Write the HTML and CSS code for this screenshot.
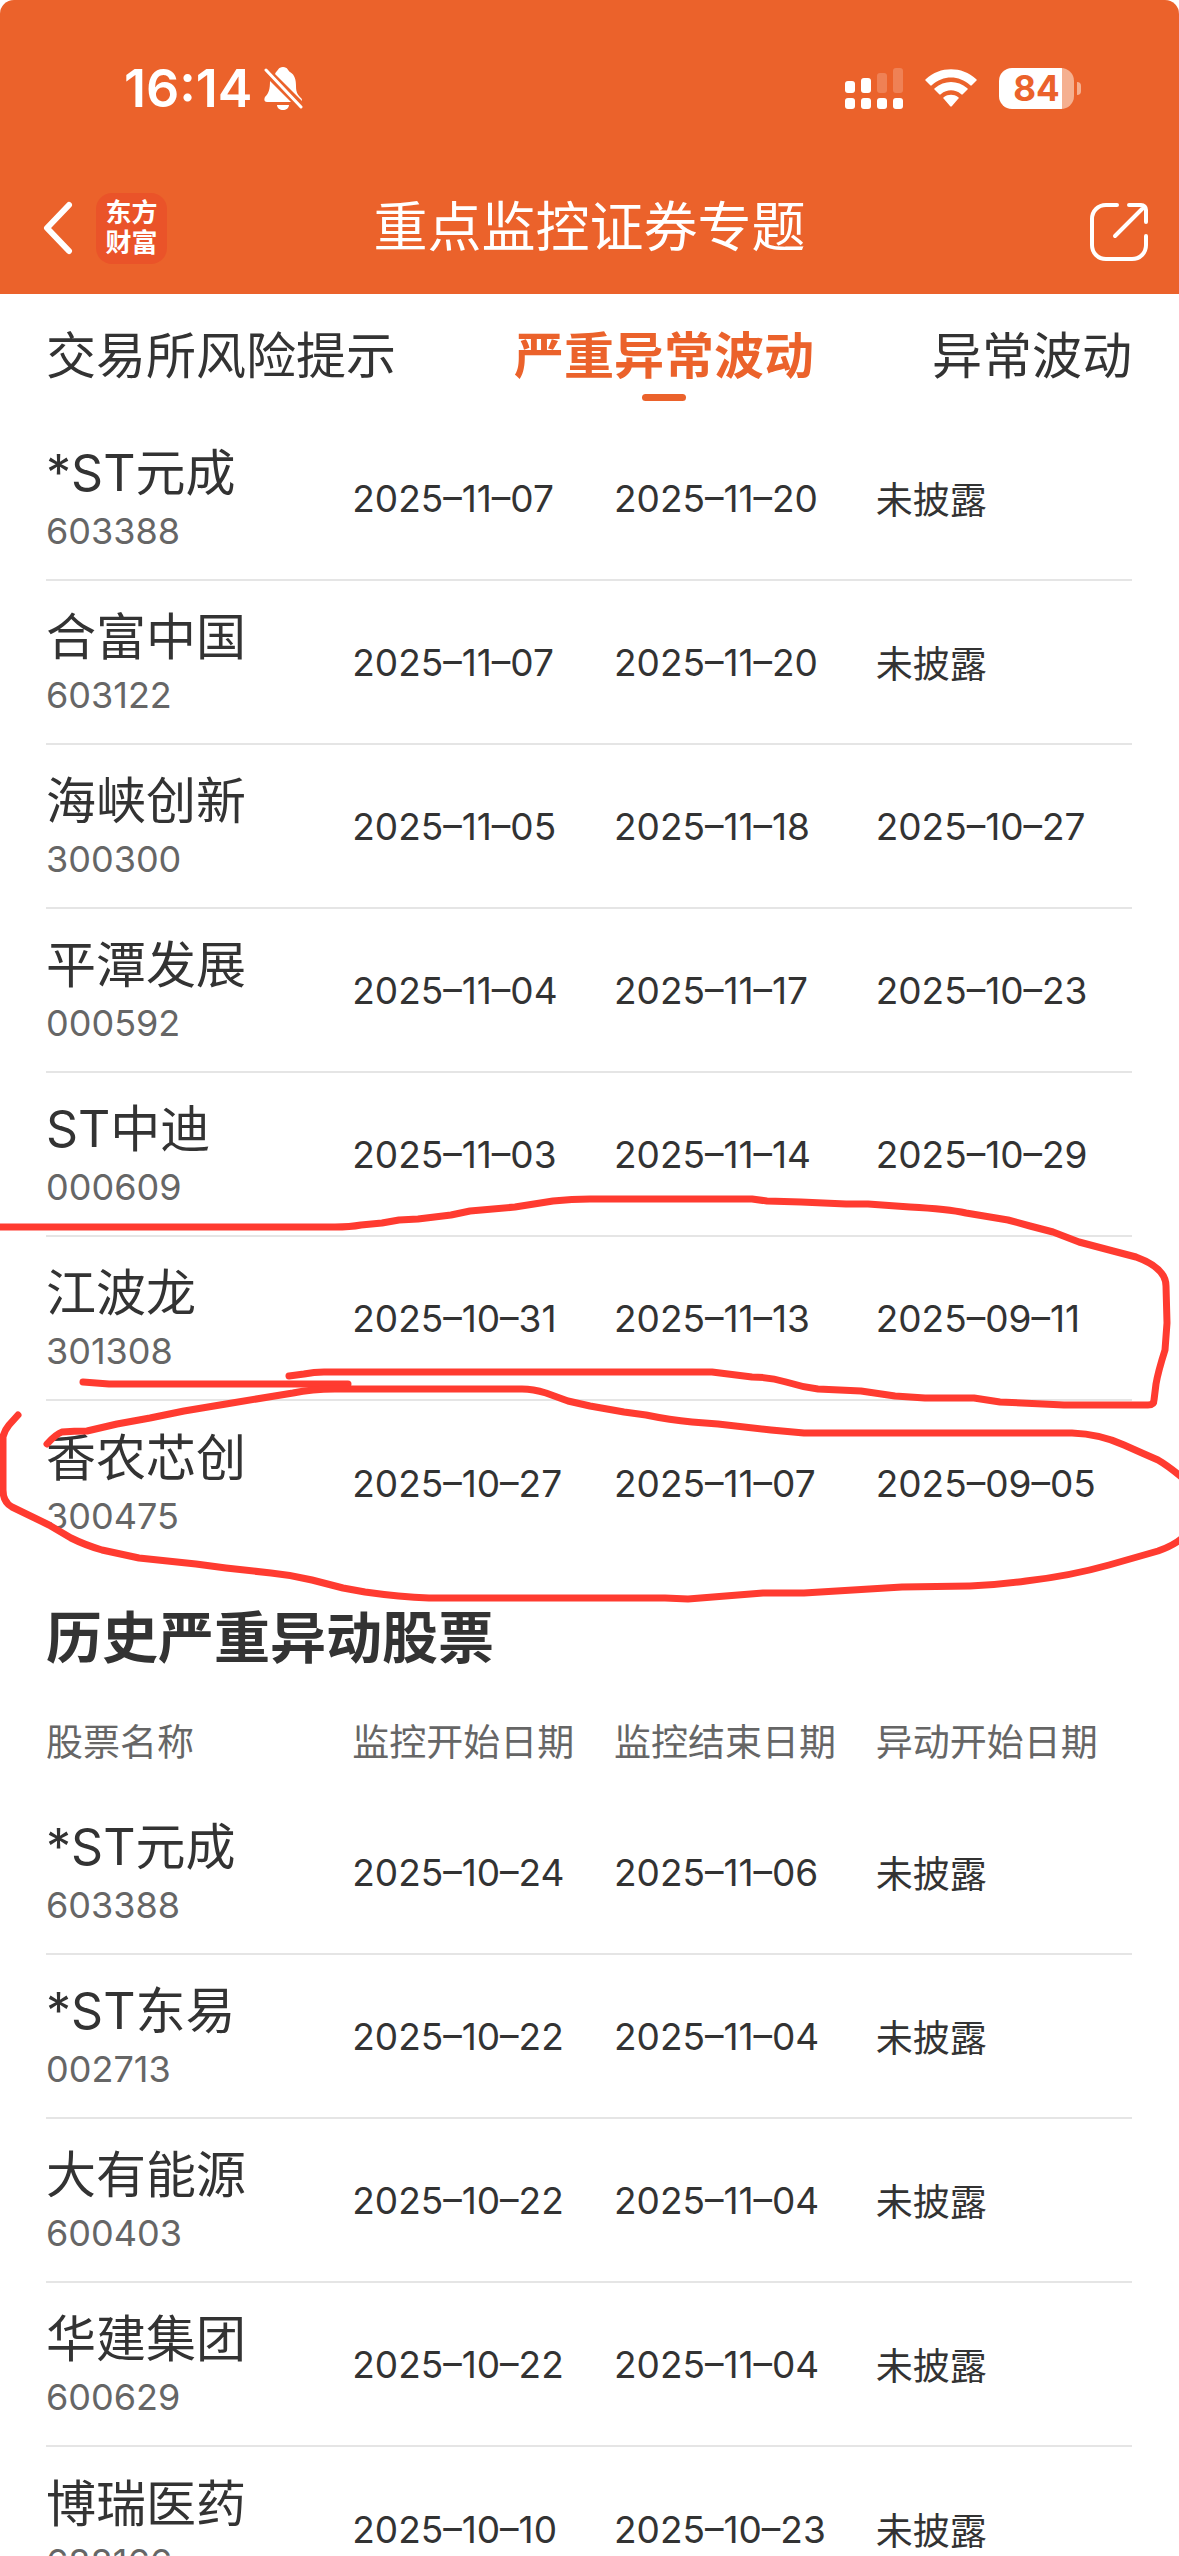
FILE: index.html
```html
<!DOCTYPE html>
<html lang="zh-CN">
<head>
    <meta charset="UTF-8">
    <meta name="viewport" content="width=device-width, initial-scale=1.0">
    <title>重点监控证券专题</title>
    <link rel="stylesheet" href="styles.css">
</head>
<body>
    <header class="header">
        <div class="status-bar">
            <div class="status-left">
                <span class="time">16:14</span>
                <svg class="bell" viewBox="0 0 39 43" width="39" height="43">
                    <path fill="#fff" d="M12 5C14 4 14 0 19 0s5 4 7 5c5 3 6 8 6 14 0 7 2 9 5 12 1 1 1 2 1 3L11 7zM6 14l21 21H3c-3 0-3-3-2-5 4-4 5-8 5-16zM13 38h12c0 3-3 5-6 5s-6-2-6-5z"/>
                    <path stroke="#fff" stroke-width="3" stroke-linecap="round" d="M2 3l35 37"/>
                </svg>
            </div>
            <div class="status-right">
                <svg viewBox="0 0 58 41" width="58" height="41" fill="#fff">
                    <rect x="0" y="13" width="10" height="12" rx="3"/>
                    <rect x="16" y="10" width="10" height="15" rx="3"/>
                    <rect x="32" y="5" width="10" height="20" rx="3" opacity=".2"/>
                    <rect x="48" y="0" width="10" height="25" rx="3" opacity=".2"/>
                    <rect x="0" y="30" width="10" height="11" rx="3"/>
                    <rect x="16" y="30" width="10" height="11" rx="3"/>
                    <rect x="32" y="30" width="10" height="11" rx="3"/>
                    <rect x="48" y="30" width="10" height="11" rx="3"/>
                </svg>
                <svg viewBox="0 0 52 38" width="52" height="38" fill="#fff">
                    <path d="M1 10C15-3 37-3 51 10c1 1 1 1 0 2l-4 4c-1 1-1 1-2 0C34 6 18 6 7 16c-1 1-1 1-2 0l-4-4c-1-1-1-1 0-2z"/>
                    <path d="M10 19c9-8 23-8 32 0 1 1 1 1 0 2l-4 4c-1 1-1 1-2 0-6-5-14-5-20 0-1 1-1 1-2 0l-4-4c-1-1-1-1 0-2z"/>
                    <path d="M19 28c4-3 10-3 14 0 1 1 1 1 0 2l-6 7c-1 1-1 1-2 0l-6-7c-1-1-1-1 0-2z"/>
                </svg>
                <div class="battery">
                    <span class="battery-level">84</span>
                </div>
            </div>
        </div>
        <div class="nav-bar">
            <div class="nav-left">
                <button class="icon-button" aria-label="返回">
                    <svg viewBox="0 0 30 54" width="30" height="54" fill="none" stroke="#fff" stroke-width="6" stroke-linecap="round" stroke-linejoin="round">
                        <path d="M26 4L4 27l22 23"/>
                    </svg>
                </button>
                <a class="logo" href="#">东方<br>财富</a>
            </div>
            <h1 class="nav-title">重点监控证券专题</h1>
            <button class="icon-button" aria-label="分享">
                <svg viewBox="0 -8 60 68" width="60" height="68" fill="none" stroke="#fff" stroke-width="4" stroke-linecap="round" stroke-linejoin="round">
                    <path d="M28 3H17C9 3 3 9 3 17v26c0 8 6 14 14 14h26c8 0 14-6 14-14V34"/>
                    <path d="M40 3h12c3 0 5 2 5 5v12M54 6L26 34"/>
                </svg>
            </button>
        </div>
    </header>

    <nav class="tabs">
        <a class="tab" href="#">交易所风险提示</a>
        <a class="tab active" href="#">严重异常波动</a>
        <a class="tab" href="#">异常波动</a>
    </nav>

    <main>
        <section class="current">
            <table class="stocks">
                <tbody>
                    <tr>
                        <td><div class="name">*ST元成</div><div class="code">603388</div></td>
                        <td>2025–11–07</td>
                        <td>2025–11–20</td>
                        <td>未披露</td>
                    </tr>
                    <tr>
                        <td><div class="name">合富中国</div><div class="code">603122</div></td>
                        <td>2025–11–07</td>
                        <td>2025–11–20</td>
                        <td>未披露</td>
                    </tr>
                    <tr>
                        <td><div class="name">海峡创新</div><div class="code">300300</div></td>
                        <td>2025–11–05</td>
                        <td>2025–11–18</td>
                        <td>2025–10–27</td>
                    </tr>
                    <tr>
                        <td><div class="name">平潭发展</div><div class="code">000592</div></td>
                        <td>2025–11–04</td>
                        <td>2025–11–17</td>
                        <td>2025–10–23</td>
                    </tr>
                    <tr>
                        <td><div class="name">ST中迪</div><div class="code">000609</div></td>
                        <td>2025–11–03</td>
                        <td>2025–11–14</td>
                        <td>2025–10–29</td>
                    </tr>
                    <tr>
                        <td><div class="name">江波龙</div><div class="code">301308</div></td>
                        <td>2025–10–31</td>
                        <td>2025–11–13</td>
                        <td>2025–09–11</td>
                    </tr>
                    <tr>
                        <td><div class="name">香农芯创</div><div class="code">300475</div></td>
                        <td>2025–10–27</td>
                        <td>2025–11–07</td>
                        <td>2025–09–05</td>
                    </tr>
                </tbody>
            </table>
            <!-- hand-drawn marks around the last two rows -->
            <svg class="marks" viewBox="0 1180 1179 440" preserveAspectRatio="none">
                <path d="M-4 1227H335Q350 1227 361 1225L382 1223 399 1220 418 1219 451 1215 470 1211 515 1207 553 1201Q572 1199 590 1199H752L767 1201 801 1202 846 1204H868L910 1207Q948 1209 966 1213L1008 1220 1030 1226 1053 1232 1079 1242 1113 1251 1136 1257Q1166 1268 1166 1286L1167 1323 1165 1350Q1158 1372 1156 1384L1154 1400Q1154 1405 1148 1405H1064L1000 1402 974 1398H925L895 1396 861 1391 818 1389Q802 1387 786 1382T752 1377L712 1372H324Q314 1372 304 1374L289 1376"/>
                <path d="M83 1382L109 1384H348"/>
                <path d="M47 1444Q56 1434 62 1432 74 1431 87 1431L117 1424 150 1418 184 1411 226 1404 293 1393Q312 1389 335 1389H522Q533 1389 546 1393L568 1401 590 1406 624 1412 646 1415Q670 1420 692 1422L718 1424 771 1430 804 1433H1072Q1100 1434 1124 1445L1142 1453 1158 1460Q1170 1467 1186 1481V1534Q1178 1544 1158 1551L1109 1565Q1070 1576 1026 1581 998 1585 970 1586L902 1587 804 1593H763L688 1599 665 1598H429Q400 1597 365 1592L343 1588 312 1580Q292 1575 271 1573L226 1568 196 1564 139 1558 102 1550Q85 1545 71 1538L49 1525 12 1507Q3 1502 3 1490V1437Q4 1431 9 1425L18 1415"/>
            </svg>
        </section>

        <section class="history">
            <h2>历史严重异动股票</h2>
            <table class="stocks">
                <thead>
                    <tr>
                        <th scope="col">股票名称</th>
                        <th scope="col">监控开始日期</th>
                        <th scope="col">监控结束日期</th>
                        <th scope="col">异动开始日期</th>
                    </tr>
                </thead>
                <tbody>
                    <tr>
                        <td><div class="name">*ST元成</div><div class="code">603388</div></td>
                        <td>2025–10–24</td>
                        <td>2025–11–06</td>
                        <td>未披露</td>
                    </tr>
                    <tr>
                        <td><div class="name">*ST东易</div><div class="code">002713</div></td>
                        <td>2025–10–22</td>
                        <td>2025–11–04</td>
                        <td>未披露</td>
                    </tr>
                    <tr>
                        <td><div class="name">大有能源</div><div class="code">600403</div></td>
                        <td>2025–10–22</td>
                        <td>2025–11–04</td>
                        <td>未披露</td>
                    </tr>
                    <tr>
                        <td><div class="name">华建集团</div><div class="code">600629</div></td>
                        <td>2025–10–22</td>
                        <td>2025–11–04</td>
                        <td>未披露</td>
                    </tr>
                    <tr>
                        <td><div class="name">博瑞医药</div><div class="code">688166</div></td>
                        <td>2025–10–10</td>
                        <td>2025–10–23</td>
                        <td>未披露</td>
                    </tr>
                </tbody>
            </table>
        </section>
    </main>
</body>
</html>
```

FILE: styles.css
```css
* {
    box-sizing: border-box;
}
body {
    margin: 0;
    height: 100vh;
    overflow: hidden;
    background-color: #fff;
    color: #333;
    font-family: Inter, "Noto Sans CJK SC", sans-serif;
    font-size: 37px;
}
a {
    color: inherit;
    text-decoration: none;
}
h1, h2 {
    margin: 0;
}
svg {
    display: block;
}
.header {
    background-color: #eb622b;
    color: #fff;
    border-radius: 14px 14px 0 0;
    padding-bottom: 16px;
}
.status-bar {
    display: flex;
    justify-content: space-between;
    align-items: center;
    height: 176px;
    padding: 0 105px 0 124px;
}
.status-left {
    display: flex;
    align-items: center;
    gap: 12px;
}
.time {
    font-size: 52px;
    font-weight: 600;
}
.status-right {
    display: flex;
    align-items: center;
    gap: 22px;
}
.battery {
    position: relative;
    width: 75px;
    height: 41px;
    border-radius: 13px;
    background: linear-gradient(to right, #fff 84%, #f5b090 84%);
    color: #eb622b;
    text-align: center;
}
.battery::after {
    content: "";
    position: absolute;
    left: 78px;
    top: 14px;
    width: 4px;
    height: 13px;
    border-radius: 0 4px 4px 0;
    background-color: #f5b090;
}
.battery-level {
    display: block;
    font-size: 35px;
    font-weight: 700;
    line-height: 41px;
}
.nav-bar {
    display: grid;
    grid-template-columns: 1fr auto 1fr;
    align-items: center;
    height: 102px;
    padding: 2px 30px 0 43px;
}
.nav-bar > .icon-button {
    justify-self: end;
}
.nav-left {
    display: flex;
    align-items: center;
    gap: 23px;
}
.icon-button {
    padding: 0;
    border: none;
    background: none;
}
.logo {
    width: 71px;
    height: 71px;
    padding-top: 5px;
    border-radius: 16px;
    background-color: #ea5329;
    font-size: 26px;
    font-weight: 700;
    line-height: 30px;
    text-align: center;
}
.nav-title {
    margin-right: 13px;
    font-size: 54px;
    font-weight: 400;
    line-height: 82px;
}
.tabs {
    display: flex;
    justify-content: space-between;
    height: 123px;
    padding: 24px 47px 0 46px;
}
.tab {
    position: relative;
    font-size: 50px;
    line-height: 76px;
}
.tab.active {
    color: #eb622b;
    font-weight: 700;
}
.tab.active::after {
    content: "";
    position: absolute;
    left: 50%;
    top: 76px;
    width: 44px;
    height: 7px;
    margin-left: -22px;
    border-radius: 4px;
    background-color: #eb622b;
}
.current, .history {
    padding: 0 47px 0 46px;
}
.current {
    position: relative;
}
.marks {
    position: absolute;
    left: 0;
    bottom: -55px;
    width: 100%;
    height: 440px;
    fill: none;
    stroke: #ff3b30;
    stroke-width: 7;
    stroke-linecap: round;
    stroke-linejoin: round;
    pointer-events: none;
}
.stocks {
    width: 100%;
    table-layout: fixed;
    border-spacing: 0;
}
.stocks td, .stocks th {
    width: 24.1%;
    padding: 0;
    text-align: left;
    white-space: nowrap;
}
.stocks td:first-child, .stocks th:first-child {
    width: 28.2%;
}
.stocks td:last-child, .stocks th:last-child {
    width: auto;
}
.stocks td {
    height: 164px;
    border-bottom: 2px solid #e5e5e5;
}
.stocks tr:last-child td {
    border-bottom: none;
}
.stocks th {
    height: 102px;
    color: #666;
    font-weight: 400;
}
.name {
    font-size: 50px;
    line-height: 66px;
}
.code {
    color: #666;
    font-size: 36px;
    line-height: 50px;
}
.history h2 {
    padding: 30px 0 8px;
    font-size: 56px;
    line-height: 86px;
}
```
